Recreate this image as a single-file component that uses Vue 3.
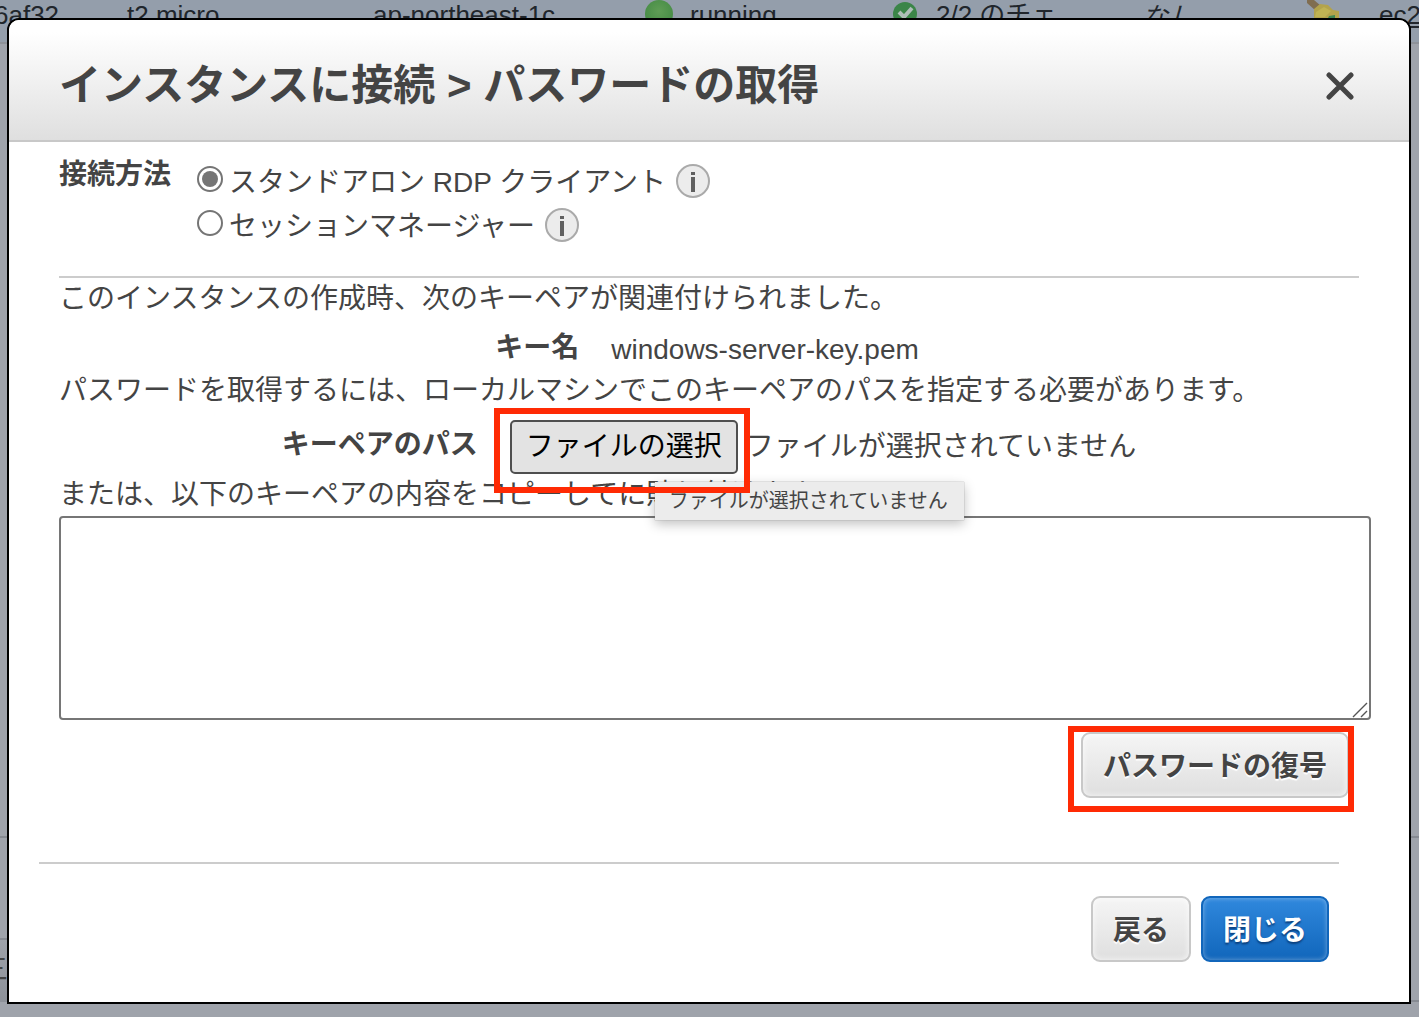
<script setup>
import { ref } from 'vue'

const method = ref('rdp')
const methods = [
  { id: 'rdp', label: 'スタンドアロン RDP クライアント' },
  { id: 'session', label: 'セッションマネージャー' },
]
const keyText = ref('')
const fileInput = ref(null)
const noFile = 'ファイルが選択されていません'
</script>

<template>
  <div class="page">
    <div class="backdrop" aria-hidden="true">
      <div class="instance-row">
        <span class="cell id">6af32</span>
        <span class="cell type">t2.micro</span>
        <span class="cell zone">ap-northeast-1c</span>
        <span class="cell state">
          <svg width="28" height="28" viewBox="0 0 28 28">
            <defs>
              <radialGradient id="dot" cx="50%" cy="40%" r="60%">
                <stop offset="0" stop-color="#5f9d55" />
                <stop offset="1" stop-color="#458b45" />
              </radialGradient>
            </defs>
            <circle cx="14" cy="14" r="14" fill="url(#dot)" />
          </svg>
          running
        </span>
        <span class="cell check">
          <svg width="28" height="28" viewBox="0 0 28 28">
            <circle cx="14" cy="14" r="12" fill="#3b8548" />
            <path d="M8 12l5 5 8-9" fill="none" stroke="#aebdb8" stroke-width="4" />
          </svg>
          2/2 のチェ
        </span>
        <span class="cell alarm">なし</span>
        <span class="cell bell">
          <svg width="34" height="28" viewBox="0 0 34 28">
            <path d="M0 0h7l7 6-5 5-9-8z" fill="#806d50" />
            <path d="M7 9l6-5 8 1 5 5 6 1v17H7z" fill="#b3a34c" />
            <path d="M9 12l8-5 7 4-6 6H8z" fill="#c0b353" />
            <path d="M22 16l6-1v5h-8z" fill="#3f8552" />
          </svg>
        </span>
        <a class="cell dns" href="#">ec2</a>
      </div>
      <div class="list-area"></div>
      <div class="detail">
        <div class="detail-main"><span class="menu-glyph">三</span></div>
        <div class="detail-side"></div>
      </div>
    </div>

    <section class="dialog" role="dialog" aria-labelledby="dialog-title">
      <header class="dialog-header">
        <h1 id="dialog-title">インスタンスに接続 &gt; パスワードの取得</h1>
        <button class="close" type="button" aria-label="閉じる">
          <svg width="28" height="28" viewBox="0 0 28 28">
            <path d="M3 3l22 22M25 3L3 25" fill="none" stroke="#444" stroke-width="5" stroke-linecap="round" />
          </svg>
        </button>
      </header>

      <div class="content">
        <div class="methods" role="radiogroup" aria-labelledby="method-label">
          <strong id="method-label">接続方法</strong>
          <div>
            <div v-for="m in methods" :key="m.id" class="method">
              <input :id="m.id" v-model="method" type="radio" name="method" :value="m.id" />
              <label :for="m.id">{{ m.label }}</label>
              <svg class="info" width="34" height="34" viewBox="0 0 34 34">
                <circle cx="17" cy="17" r="16" fill="#ececec" stroke="#aaa" stroke-width="2" />
                <path d="M17 8v3M17 13v15" stroke="#606060" stroke-width="4" />
              </svg>
            </div>
          </div>
        </div>

        <hr />

        <p>このインスタンスの作成時、次のキーペアが関連付けられました。</p>
        <div class="field key-name">
          <strong>キー名</strong>
          <span class="key-value">windows-server-key.pem</span>
        </div>
        <p>パスワードを取得するには、ローカルマシンでこのキーペアのパスを指定する必要があります。</p>
        <div class="field">
          <label class="path-label" for="key-file">キーペアのパス</label>
          <div class="file">
            <span class="marked file-mark">
              <button class="choose" type="button" @click="fileInput.click()">ファイルの選択</button>
            </span>
            <input id="key-file" ref="fileInput" type="file" hidden />
            <span class="file-status">{{ noFile }}</span>
            <span class="tooltip" role="tooltip">{{ noFile }}</span>
          </div>
        </div>
        <p><label for="key-text">または、以下のキーペアの内容をコピーしてに貼り付けます</label></p>
        <div class="key-box">
          <textarea id="key-text" v-model="keyText"></textarea>
          <svg class="grip" width="16" height="16" viewBox="0 0 16 16">
            <path d="M1 15L15 1M9 15l6-6" stroke="#555" stroke-width="1.4" />
          </svg>
        </div>
        <div class="decrypt">
          <span class="marked decrypt-mark">
            <button class="btn" type="button">パスワードの復号</button>
          </span>
        </div>
      </div>

      <footer class="dialog-footer">
        <button class="btn" type="button">戻る</button>
        <button class="btn primary" type="button">閉じる</button>
      </footer>
    </section>
  </div>
</template>

<style>
body {
  margin: 0;
}
</style>

<style scoped>
.page {
  display: grid;
  min-height: 100vh;
  overflow: hidden;
  font-family: "Liberation Sans", "Noto Sans CJK JP", sans-serif;
  font-size: 28px;
  color: #444;
  background: #9fa3ab;
}
.backdrop,
.dialog {
  grid-area: 1 / 1;
  min-width: 0;
}
.backdrop {
  display: flex;
  flex-direction: column;
  overflow: hidden;
}
.instance-row {
  display: flex;
  box-sizing: border-box;
  height: 44px;
  border-bottom: 2px solid #8e9299;
  background: #949eab;
  color: #21262c;
  font-size: 26px;
  line-height: 30px;
  white-space: nowrap;
}
.cell {
  display: flex;
  gap: 17px;
  flex-shrink: 0;
}
.id { width: 133px; margin-left: -6px; }
.type { width: 246px; }
.zone { width: 272px; }
.state { width: 246px; }
.check { width: 251px; }
.alarm {
  width: 165px;
  font-style: italic;
  line-height: 34px;
}
.bell { width: 72px; }
.dns { color: inherit; }
.list-area {
  height: 792px;
}
.detail {
  display: flex;
  box-sizing: border-box;
  height: 166px;
  border-top: 2px solid #868a92;
}
.detail-main,
.detail-side {
  flex: 1;
  box-sizing: border-box;
}
.detail-main {
  margin-top: 100px;
  padding-top: 10px;
  border-top: 2px solid #868a92;
  background: linear-gradient(#9fa3ab, #8d9199);
}
.detail-side {
  border-bottom: 2px solid #868a92;
}
.menu-glyph {
  display: block;
  margin-left: -20px;
  line-height: 40px;
}
.dialog {
  display: flex;
  flex-direction: column;
  box-sizing: border-box;
  margin: 18px 8px 13px 7px;
  border: 2px solid #000;
  border-radius: 12px 12px 0 0;
  background: #fff;
  z-index: 1;
}
.dialog-header {
  display: flex;
  align-items: center;
  justify-content: space-between;
  box-sizing: border-box;
  height: 122px;
  padding: 12px 55px 0 50px;
  border-bottom: 2px solid #c8c8c8;
  border-radius: 10px 10px 0 0;
  background: linear-gradient(#fff 10%, #dfdfdf);
}
h1 {
  margin: 0;
  font-size: 42px;
  line-height: 60px;
}
.close {
  display: flex;
  padding: 0;
  border: 0;
  background: none;
  cursor: pointer;
}
.content {
  padding: 17px 50px 0;
}
.methods {
  display: flex;
  gap: 26px;
  line-height: 32px;
}
.method {
  display: flex;
  align-items: center;
  height: 44px;
}
.method label {
  padding-top: 4px;
}
.method input {
  display: grid;
  place-content: center;
  appearance: none;
  box-sizing: border-box;
  width: 26px;
  height: 26px;
  margin: 0 6px 4px 0;
  border: 2px solid #757575;
  border-radius: 50%;
}
.method input:checked::before {
  content: "";
  width: 16px;
  height: 16px;
  border-radius: 50%;
  background: #757575;
}
.info {
  margin-left: 10px;
}
hr {
  height: 2px;
  margin: 29px 0 0;
  border: 0;
  background: #ccc;
}
p {
  margin: 0;
  line-height: 42px;
}
.field {
  display: flex;
  align-items: center;
  justify-content: center;
  gap: 32px;
  margin-top: 8px;
}
.key-name {
  height: 50px;
  margin-top: 0;
  padding-right: 4px;
}
.key-value {
  padding-top: 10px;
}
.path-label {
  padding-bottom: 10px;
  font-weight: bold;
}
.file {
  position: relative;
  display: flex;
  align-items: center;
  gap: 8px;
}
.file-status {
  padding-bottom: 6px;
}
.marked {
  position: relative;
  display: flex;
}
.marked::after {
  content: "";
  position: absolute;
  border: 6px solid #ff2a04;
  pointer-events: none;
  z-index: 3;
}
.file-mark::after {
  inset: -12px -12px -19px -16px;
}
.decrypt-mark::after {
  inset: -6px -5px -14px -13px;
}
.choose {
  height: 54px;
  padding: 0 14px 6px;
  border: 2px solid #4f4f4f;
  border-radius: 5px;
  background: #e3e3e3;
  color: #000;
  font: inherit;
}
.tooltip {
  position: absolute;
  top: 62px;
  left: 145px;
  padding: 0 16px 0 14px;
  background: #ececec;
  box-shadow: 0 0 1px #888, 0 4px 12px rgba(0, 0, 0, 0.25);
  font-size: 20px;
  line-height: 38px;
  white-space: nowrap;
  z-index: 2;
}
.key-box {
  position: relative;
  margin-right: -12px;
}
textarea {
  display: block;
  box-sizing: border-box;
  width: 100%;
  height: 204px;
  margin: 0;
  border: 2px solid #767676;
  border-radius: 4px;
  background: #fff;
  font: inherit;
  outline: none;
}
textarea::-webkit-resizer {
  background: transparent;
}
.grip {
  position: absolute;
  right: 3px;
  bottom: 2px;
  pointer-events: none;
}
.decrypt {
  display: flex;
  justify-content: flex-end;
  padding: 12px 10px 0 0;
}
.btn {
  height: 66px;
  padding: 0 20px 2px;
  border: 2px solid #c8c8c8;
  border-radius: 9px;
  background: linear-gradient(#f5f5f5, #dfdfdf);
  box-shadow: inset 0 0 6px rgba(255, 255, 255, 0.8);
  color: #444;
  font: inherit;
  font-weight: bold;
  text-shadow: 0 2px 1px #fff;
}
.primary {
  border-color: #1166bb;
  background: linear-gradient(#3088dd, #1166bb);
  box-shadow: inset 0 0 5px rgba(255, 255, 255, 0.4);
  color: #fff;
  text-shadow: 0 2px 2px #0a3f7c;
}
.dialog-footer {
  display: flex;
  justify-content: flex-end;
  gap: 10px;
  margin: 64px 70px 0 30px;
  padding: 32px 10px 40px;
  border-top: 2px solid #ccc;
}
</style>
